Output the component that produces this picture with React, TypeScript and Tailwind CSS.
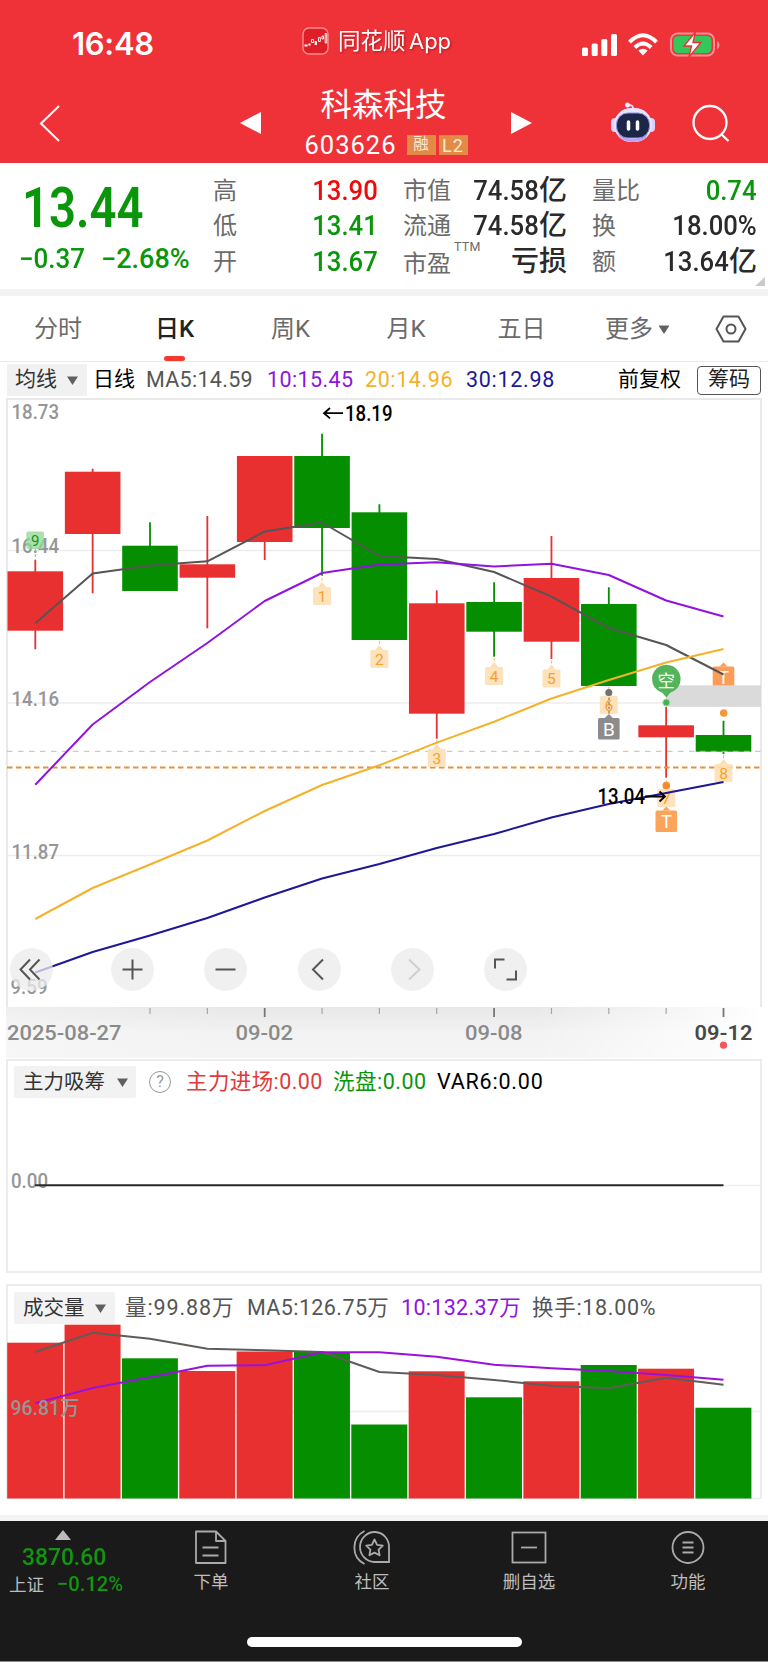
import type { ReactNode } from 'react';

import clsx from 'clsx';

const RED = '#e83030';
const GREEN = '#058f00';

const STEP = 57.35;
const FIRST_X = 35.3;

const candleX = (index: number) => FIRST_X + index * STEP;

type Candle = {
  up: boolean;
  top: number;
  bottom: number;
  high: number;
  low: number;
  volume: number;
};

const candles: Candle[] = [
  { up: true, top: 571.3, bottom: 630.7, high: 560, low: 649.3, volume: 1342.7 },
  { up: true, top: 471.7, bottom: 534, high: 468.7, low: 593.3, volume: 1324.7 },
  { up: false, top: 545.7, bottom: 591, high: 522.3, low: 591, volume: 1358.3 },
  { up: true, top: 564.3, bottom: 577.7, high: 516, low: 628.3, volume: 1371 },
  { up: true, top: 456, bottom: 542, high: 456, low: 560, volume: 1351.5 },
  { up: false, top: 456, bottom: 528, high: 433.7, low: 575.7, volume: 1352 },
  { up: false, top: 512.3, bottom: 640, high: 504.3, low: 640, volume: 1424.5 },
  { up: true, top: 603.3, bottom: 713.7, high: 590.3, low: 738.7, volume: 1371.3 },
  { up: false, top: 602, bottom: 631.7, high: 582.3, low: 656.7, volume: 1397.3 },
  { up: true, top: 578, bottom: 641.7, high: 536, low: 659, volume: 1381.3 },
  { up: false, top: 604, bottom: 686, high: 587.3, low: 686, volume: 1365 },
  { up: true, top: 725.3, bottom: 737.3, high: 707, low: 777.7, volume: 1368.7 },
  { up: false, top: 735, bottom: 751.7, high: 720.7, low: 754, volume: 1407.7 },
];

const priceLines = [
  {
    color: '#555555',
    values: [623.3, 573.6, 565.5, 561.3, 531.5, 522.5, 556, 559, 572, 596.7, 628, 645, 674.5],
  },
  {
    color: '#9013e0',
    values: [784.7, 724.5, 682, 643, 601, 573, 564.5, 562.3, 566.5, 563.7, 575, 600.5, 616.5],
  },
  {
    color: '#f3b229',
    values: [919, 888, 864.5, 840.5, 811, 785, 765.3, 742.6, 721.7, 698.5, 680, 662.5, 649],
  },
  {
    color: '#1c1896',
    values: [972.5, 952, 935.5, 918, 897.5, 878.5, 864, 848, 834, 817.5, 804, 793, 782],
  },
];

const volumeLines = [
  {
    color: '#605c58',
    values: [1352, 1332.7, 1338.7, 1348.7, 1350.3, 1352, 1372, 1375, 1380, 1385.7, 1388.3, 1377.7, 1384.7],
  },
  {
    color: '#9a10dc',
    values: [1403.3, 1388, 1377.3, 1365.7, 1365.3, 1352.3, 1352.3, 1356.7, 1364.7, 1368.3, 1371, 1375, 1379.7],
  },
];

const toPoints = (values: number[]) =>
  values.map((y, index) => `${candleX(index)},${y}`).join(' ');

function Lines({ lines }: { lines: typeof priceLines }) {
  return (
    <>
      {lines.map(({ color, values }) => (
        <polyline
          key={color}
          points={toPoints(values)}
          fill="none"
          stroke={color}
          strokeWidth="2"
          strokeLinejoin="round"
        />
      ))}
    </>
  );
}

function Label({
  x,
  y,
  width,
  size = 21,
  fill = '#969696',
  weight = 500,
  children,
}: {
  x: number;
  y: number;
  width: number;
  size?: number;
  fill?: string;
  weight?: number;
  children: string;
}) {
  return (
    <text
      x={x}
      y={y}
      fontSize={size}
      fontWeight={weight}
      fill={fill}
      textLength={width}
      lengthAdjust="spacingAndGlyphs"
    >
      {children}
    </text>
  );
}

/** Numbered tag under a candle, y is the top of the square. */
function CountTag({ x, y, children }: { x: number; y: number; children: string }) {
  return (
    <g>
      <path d={`M${x} ${y - 9}V${y - 2}`} stroke="#f5b85c" strokeDasharray="3 2" />
      <rect x={x - 9} y={y} width="18" height="18" rx="1.5" fill="#fddfb4" fillOpacity="0.9" />
      <path d={`M${x - 4} ${y}L${x} ${y - 5}L${x + 4} ${y}Z`} fill="#fddfb4" />
      <text x={x} y={y + 14.5} fontSize="15.5" fill="#f5a12c" textAnchor="middle">
        {children}
      </text>
    </g>
  );
}

function LetterTag({
  x,
  y,
  fill,
  children,
}: {
  x: number;
  y: number;
  fill: string;
  children: string;
}) {
  return (
    <g>
      <path d={`M${x - 4} ${y}L${x} ${y - 4}L${x + 4} ${y}Z`} fill={fill} />
      <rect x={x - 10.8} y={y} width="21.6" height="21.6" rx="1.5" fill={fill} />
      <text x={x} y={y + 17.5} fontSize="19" fill="#fff" textAnchor="middle">
        {children}
      </text>
    </g>
  );
}

function RoundButton({ children, muted }: { children: ReactNode; muted?: boolean }) {
  return (
    <button className="flex size-[43px] items-center justify-center rounded-full bg-[#ebebeb]/75">
      <svg
        width="43"
        height="43"
        viewBox="0 0 43 43"
        fill="none"
        stroke={muted ? '#cfcfcf' : '#555'}
        strokeWidth="2"
      >
        {children}
      </svg>
    </button>
  );
}

function Caret({ className }: { className?: string }) {
  return (
    <svg width="11" height="9" viewBox="0 0 11 9" className={className}>
      <path d="M0 .5h11L5.5 9z" fill="#606060" />
    </svg>
  );
}

function StatusBar() {
  return (
    <div className="flex h-[86px] items-start text-white">
      <span className="w-[229px] pl-[72px] pt-[26px] font-[Inter] text-[31px] leading-9 font-semibold tracking-[-0.3px]">
        16:48
      </span>
      <div className="flex flex-1 items-center gap-[9px] pl-[73px] pt-[25px]">
        <svg width="27" height="28" viewBox="0 0 27 28" fill="none">
          <rect x="1" y="1" width="25" height="26" rx="6" fill="#df1f27" stroke="#ff8b8b" strokeWidth="1.4" />
          <path d="M2.500 18.500h3M6.500 17.500h2" stroke="#fff" strokeWidth="2.200" />
          <path d="M9.500 15.500v-3h2v3zM16.500 14.500v-4h1.800v4zM20 12V9h1.500v3zM23.200 16V6.500h1.500V16z" stroke="#fff" strokeWidth=".9" />
          <path d="M13.800 14v4" stroke="#fff" strokeWidth="2.200" />
        </svg>
        <span className="text-[22.500px] leading-8 drop-shadow-[1px_1px_1px_rgba(90,0,0,0.45)]">
          同花顺 <span className="-ml-[2px] font-[Inter] text-[22px] tracking-[-0.1px]">App</span>
        </span>
      </div>
      <div className="flex w-[186px] items-center gap-[11px] pt-[32px]">
        <svg width="35" height="24" viewBox="0 0 35 24" fill="#fff">
          <rect x="0" y="14.500" width="6" height="8.500" rx="1.500" />
          <rect x="9.700" y="10.500" width="6" height="12.500" rx="1.500" />
          <rect x="19.300" y="6" width="6" height="17" rx="1.500" />
          <rect x="29" y="1" width="6" height="22" rx="1.500" />
        </svg>
        <svg width="30" height="23" viewBox="0 0 30 23" fill="none" stroke="#fff" strokeWidth="4">
          <path d="M1.500 9.200Q15-4.800 28.500 9.200" />
          <path d="M6.800 14.500Q15 6.500 23.200 14.500" />
          <path d="M15 22.500l-4.600-5q4.600-3.600 9.200 0z" fill="#fff" stroke="none" />
        </svg>
        <svg width="50" height="25" viewBox="0 0 50 25" fill="none" className="ml-[1px]">
          <rect x="1" y="1.500" width="43" height="22" rx="6.500" stroke="#f78f94" strokeWidth="2" />
          <rect x="3.500" y="4" width="38" height="17" rx="4.500" fill="#34c759" />
          <path d="M47 9v8q2.500-1 2.500-4T47 9z" fill="#f78f94" />
          <path d="M25.500 0L14 14h7.500L19 25 31 10.500h-8z" fill="#fff" stroke="#ef3138" strokeWidth="1.400" />
        </svg>
      </div>
    </div>
  );
}

function TitleBar() {
  return (
    <div className="flex h-[77px] items-start text-white">
      <svg width="240" height="77" viewBox="0 0 240 77" fill="none" className="shrink-0">
        <path d="M59 20L41 37.500L59 55" stroke="#fff" strokeWidth="2" />
      </svg>
      <svg width="21" height="77" viewBox="0 0 21 77" className="shrink-0">
        <path d="M21 26v22L0 37z" fill="#fff" />
      </svg>
      <div className="flex w-[250px] flex-col items-center">
        <h1 className="h-10 pr-[5px] text-[31.500px] leading-10">科森科技</h1>
        <div className="flex items-center gap-[3px] pt-[7px]">
          <span className="mr-[7px] text-[25.500px] leading-6 tracking-[1px]">603626</span>
          <span className="flex h-[20px] w-[29px] items-center justify-center bg-[#e38b46] text-[15.500px] text-[#fde9d0]">
            融
          </span>
          <span className="flex h-[20px] w-[29px] items-center justify-center bg-[#e38b46] text-[18px] tracking-[1px] text-[#fde9d0]">
            L2
          </span>
        </div>
      </div>
      <svg width="21" height="77" viewBox="0 0 21 77" className="shrink-0">
        <path d="M0 26v22l21-11z" fill="#fff" />
      </svg>
      <svg width="46" height="42" viewBox="0 0 46 42" fill="none" className="mt-[15px] ml-[78px] shrink-0">
        <path d="M23 9q1-5-4-5" stroke="#e4dcfa" strokeWidth="2" />
        <circle cx="17.500" cy="4" r="2.500" fill="#eee8ff" />
        <rect x="1" y="17" width="9" height="14" rx="4" fill="#d9d3fb" />
        <rect x="36" y="17" width="9" height="14" rx="4" fill="#d9d3fb" />
        <rect x="4" y="7" width="38" height="34" rx="17" fill="#e9e3fd" />
        <path d="M8 33q15 10 30 0-4 8-15 8T8 33z" fill="#b9a4f3" />
        <rect x="6.500" y="12" width="33" height="25" rx="11.500" fill="#1c2748" stroke="#8f93ea" strokeWidth="1" />
        <path d="M18.500 21v7M27.500 21v7" stroke="#fff" strokeWidth="3.500" strokeLinecap="round" />
      </svg>
      <svg width="40" height="40" viewBox="0 0 40 40" fill="none" className="mt-[18px] ml-[36px] shrink-0">
        <circle cx="18" cy="18.500" r="16.500" stroke="#fff" strokeWidth="2.300" />
        <path d="M29 30l7.500 7" stroke="#fff" strokeWidth="2.300" />
      </svg>
    </div>
  );
}

type QuoteRow = {
  label: string;
  color: string;
  value?: string;
  unit?: string;
  note?: string;
};

const quoteColumns: { className: string; rows: QuoteRow[] }[] = [
  {
    className: 'w-[165px] ml-[213px]',
    rows: [
      { label: '高', value: '13.90', color: 'text-[#f00b0b]' },
      { label: '低', value: '13.41', color: 'text-[#0a960a]' },
      { label: '开', value: '13.67', color: 'text-[#0a960a]' },
    ],
  },
  {
    className: 'w-[164px] ml-[25px]',
    rows: [
      { label: '市值', value: '74.58', unit: '亿', color: 'text-[#2a2a2a]' },
      { label: '流通', value: '74.58', unit: '亿', color: 'text-[#2a2a2a]' },
      { label: '市盈', note: 'TTM', unit: '亏损', color: 'text-[#2a2a2a]' },
    ],
  },
  {
    className: 'w-[165px] ml-[25px]',
    rows: [
      { label: '量比', value: '0.74', color: 'text-[#0a960a]' },
      { label: '换', value: '18.00%', color: 'text-[#2a2a2a]' },
      { label: '额', value: '13.64', unit: '亿', color: 'text-[#2a2a2a]' },
    ],
  },
];

function Quote() {
  return (
    <section className="relative flex h-[126px] bg-white">
      <div className="absolute top-0 left-0 flex flex-col font-medium text-[#0a960a]">
        <span className="mt-[20px] ml-[22px] origin-left scale-x-[0.86] text-[55px] leading-[50px] font-semibold">
          13.44
        </span>
        <div className="mt-[11px] flex text-[27px] leading-[30px]">
          <span className="ml-[19px] w-[82px] origin-left scale-x-[0.96]">−0.37</span>
          <span className="origin-left">−2.68%</span>
        </div>
      </div>
      {quoteColumns.map(({ className, rows }) => (
        <dl key={rows[0].label} className={clsx('flex shrink-0 flex-col pt-[10px]', className)}>
          {rows.map(({ label, value, unit, note, color }) => (
            <div key={label} className="flex h-[35.500px] items-center">
              <dt className={clsx('flex text-[24px] text-[#6b6b6b]', note && 'pt-[4px]')}>
                {label}
                {note && <sup className="top-[1px] ml-[3px] text-[12.500px] tracking-[0.3px]">{note}</sup>}
              </dt>
              <dd className={clsx('ml-auto flex items-center font-medium', color)}>
                {value && (
                  <span className="origin-right scale-x-[0.9] text-[28.500px] leading-8">{value}</span>
                )}
                {unit && <span className="text-[28px] leading-8">{unit}</span>}
              </dd>
            </div>
          ))}
        </dl>
      ))}
      <svg width="10" height="9" viewBox="0 0 10 9" className="absolute right-[3px] bottom-[3px]">
        <path d="M10 0v9H0z" fill="#c9c9c9" />
      </svg>
    </section>
  );
}

function Tabs() {
  const tabs = [
    { label: '分时', className: 'w-[116px]' },
    { label: '日K', className: 'w-[117px]', active: true },
    { label: '周K', className: 'w-[115px]' },
    { label: '月K', className: 'w-[116px]' },
    { label: '五日', className: 'w-[115px]' },
  ];

  return (
    <nav className="box-content flex h-[65px] items-center border-t-[7px] border-b border-t-[#f3f3f3] border-b-[#e9e9e9] bg-white text-[24px] text-[#6b6b6b]">
      {tabs.map(({ label, className, active }) => (
        <div
          key={label}
          className={clsx('relative flex h-full shrink-0 items-center justify-center pt-px', className, {
            'font-medium text-[#222]': active,
          })}
        >
          {label}
          {active && <i className="absolute bottom-0 h-[5px] w-[21px] rounded-full bg-[#f9382f]" />}
        </div>
      ))}
      <div className="ml-[26px] flex items-center gap-[5px] pt-px">
        更多
        <Caret className="w-[12px]" />
      </div>
      <svg width="32" height="28" viewBox="0 0 32 28" fill="none" stroke="#555" strokeWidth="2" className="ml-[45px]">
        <path d="M8.500 1.500h15L30.500 14l-7 12.500h-15L1.500 14z" strokeLinejoin="round" />
        <circle cx="16" cy="14" r="4.500" />
      </svg>
    </nav>
  );
}

function AverageBar() {
  return (
    <div className="flex h-[36px] items-center pl-[7px] text-[21px] text-[#555]">
      <div className="flex h-[32px] w-[80px] items-center gap-[10px] bg-[#f1f1f1] pl-[8px] text-[#333]">
        均线
        <Caret />
      </div>
      <span className="ml-[6px] w-[53px] text-black">日线</span>
      <span className="w-[121px] text-[21.500px] tracking-[0.300px]">MA5:14.59</span>
      <span className="w-[98px] text-[21.500px] tracking-[0.400px] text-[#9013e0]">10:15.45</span>
      <span className="w-[101px] text-[21.500px] tracking-[0.600px] text-[#f3b229]">20:14.96</span>
      <span className="w-[152px] text-[21.500px] tracking-[0.700px] text-[#1c1896]">30:12.98</span>
      <span className="w-[79px] text-black">前复权</span>
      <span className="flex h-[29px] w-[64px] items-center justify-center rounded-[4px] border-[1.500px] border-[#555] text-[#222]">
        筹码
      </span>
    </div>
  );
}

function PriceChart() {
  const ticks = [2, 3, 4, 5, 6, 7, 8, 9, 10, 11, 12];

  return (
    <div className="relative h-[661px]">
      <svg width="768" height="661" viewBox="0 398 768 661" className="block">
        <defs>
          <linearGradient id="axis" x1="0" y1="0" x2="0" y2="1">
            <stop offset="0" stopColor="#e8e8e8" />
            <stop offset="0.500" stopColor="#f2f2f2" />
            <stop offset="1" stopColor="#f4f4f4" />
          </linearGradient>
          <linearGradient id="fade" x1="0" y1="0" x2="1" y2="0">
            <stop offset="0" stopColor="#fff" stopOpacity="0.300" />
            <stop offset="0.300" stopColor="#fff" stopOpacity="0" />
            <stop offset="0.700" stopColor="#fff" stopOpacity="0" />
            <stop offset="0.950" stopColor="#fff" stopOpacity="0.800" />
            <stop offset="1" stopColor="#fff" />
          </linearGradient>
        </defs>
        <path d="M7 1008V399H761V1008" fill="none" stroke="#e9e9e9" strokeWidth="2" />
        <rect x="6" y="1007" width="756" height="51" fill="url(#axis)" />
        <rect x="6" y="1007" width="756" height="51" fill="url(#fade)" />
        {[550.5, 703, 855.5].map((y) => (
          <path key={y} d={`M8 ${y}H760`} stroke="#ededed" strokeWidth="1.300" />
        ))}

        <Label x={11.5} y={418.5} width={47.5}>18.73</Label>
        <Label x={11.5} y={553.3} width={47.5}>16.44</Label>
        <Label x={11.5} y={705.5} width={47.5}>14.16</Label>
        <Label x={11.5} y={858.5} width={47.5}>11.87</Label>
        <Label x={10.5} y={993.5} width={37}>9.59</Label>

        {candles.map(({ up, top, bottom, high, low }, index) => (
          <g key={index} fill={up ? RED : GREEN}>
            <rect x={candleX(index) - 0.9} y={high} width="1.8" height={low - high} />
            <rect x={candleX(index) - 27.8} y={top} width="55.6" height={bottom - top} />
          </g>
        ))}

        <path d="M7 751.300H761" stroke="#c9bfa0" strokeWidth="1" strokeDasharray="5.500 5.500" />
        <path d="M7 767.500H761" stroke="#ea9037" strokeWidth="1.800" strokeDasharray="5.500 3.500" />

        <rect x="26.300" y="531.500" width="17.700" height="17.500" rx="2" fill="#8fd694" fillOpacity="0.750" />
        <path d="M35.300 549v11" stroke="#7cc97f" strokeDasharray="3 2" />
        <text x="35.300" y="545.500" fontSize="15" fill="#0d9a1c" textAnchor="middle">9</text>
        <CountTag x={candleX(5)} y={587}>1</CountTag>
        <CountTag x={candleX(6)} y={650}>2</CountTag>
        <CountTag x={candleX(7)} y={749}>3</CountTag>
        <CountTag x={candleX(8)} y={667}>4</CountTag>
        <CountTag x={candleX(9)} y={669.5}>5</CountTag>
        <CountTag x={candleX(10)} y={696}>6</CountTag>
        <CountTag x={candleX(11)} y={789}>7</CountTag>
        <CountTag x={candleX(12)} y={764}>8</CountTag>

        <path d="M609 693v24" stroke="#666" strokeDasharray="2.500 2" />
        <circle cx="608.800" cy="692.500" r="3.500" fill="#707070" />
        <LetterTag x={608.8} y={718} fill="#8d8b8e">B</LetterTag>
        <LetterTag x={666.3} y={810.5} fill="#fda45b">T</LetterTag>
        <LetterTag x={723.5} y={666.5} fill="#fb9c58">T</LetterTag>
        <rect x="666" y="685.300" width="95" height="21.500" fill="#dadada" />
        <Lines lines={priceLines} />
        <circle cx="723.700" cy="713" r="3.800" fill="#f8963c" />
        <circle cx="666.300" cy="785.500" r="3.800" fill="#f58a2e" />
        <circle cx="666.300" cy="702.500" r="3.500" fill="#45b050" stroke="#a8d8aa" />
        <path
          d="M666.300 697.500l-4-4.800a14.300 14.300 0 1 1 8 0z"
          fill="#53b45a"
        />
        <text x="666.300" y="686.500" fontSize="17.500" fill="#fff" textAnchor="middle">空</text>

        <g fill="none" stroke="#000" strokeWidth="1.800">
          <path d="M343 413.200H324M330 408l-6 5.200 6 5.200" />
          <path d="M645 796.500h20M659.500 791.500l5.500 5-5.500 5" />
        </g>
        <Label x={345} y={420.5} width={47.5} size={21.5} fill="#000">18.19</Label>
        <Label x={597.5} y={804} width={47.5} size={21.5} fill="#000">13.04</Label>

        {ticks.map((index) => (
          <path
            key={index}
            d={`M${candleX(index)} 1008v${index % 4 === 0 ? 9 : 6}`}
            stroke={index % 4 === 0 ? '#777' : '#a5a5a5'}
            strokeWidth={index % 4 === 0 ? 1.8 : 1.2}
          />
        ))}
        <Label x={7} y={1040} width={114.500} size={20.500} fill="#8a8a8a">2025-08-27</Label>
        <Label x={235.5} y={1039.500} width={57.500} size={20.500} fill="#8a8a8a">09-02</Label>
        <Label x={465} y={1039.500} width={57.500} size={20.500} fill="#8a8a8a">09-08</Label>
        <Label x={694.5} y={1039.500} width={58} size={20.500} weight={600} fill="#484848">09-12</Label>
        <circle cx="723.500" cy="1045.200" r="3.600" fill="#f0575f" />
      </svg>
      <div className="absolute top-[550px] left-[10px] flex">
        <RoundButton>
          <path d="M20 11.500L10.500 21.500L20 31.500M29.500 11.500L20 21.500L29.500 31.500" />
        </RoundButton>
        <div className="ml-[58px] flex gap-[50.300px]">
          <RoundButton>
            <path d="M11.500 21.500h20M21.500 11.500v20" />
          </RoundButton>
          <RoundButton>
            <path d="M11.500 21.500h20" />
          </RoundButton>
          <RoundButton>
            <path d="M25 11.500L15 21.500L25 31.500" />
          </RoundButton>
          <RoundButton muted>
            <path d="M18 11.500L28.500 21.500L18 31.500" />
          </RoundButton>
          <RoundButton>
            <path d="M11 20.500v-9h9.500M32 22.500v9h-9.500" />
          </RoundButton>
        </div>
      </div>
    </div>
  );
}

function MainForcePanel() {
  return (
    <section className="mx-[6px] h-[214px] border-2 border-[#ececec]">
      <div className="flex items-center pt-[5px] pl-[6px] text-[21.500px]">
        <div className="flex h-[32px] w-[122px] items-center gap-[12px] rounded-[2px] bg-[#f2f2f2] pl-[9px] text-[20.500px] text-[#333]">
          主力吸筹
          <Caret />
        </div>
        <div className="ml-[13px] flex size-[22px] items-center justify-center rounded-full border-[1.500px] border-[#999] text-[16px] text-[#999]">
          ?
        </div>
        <span className="ml-[15px] w-[147px] tracking-[0.400px] text-[#e03a3a]">主力进场:0.00</span>
        <span className="w-[104px] tracking-[0.500px] text-[#0a960a]">洗盘:0.00</span>
        <span className="tracking-[0.800px] text-black">VAR6:0.00</span>
      </div>
      <svg width="752" height="60" viewBox="8 1150 752 60" className="mt-[51px]">
        <path d="M723 1186.300H760" stroke="#ececec" />
        <Label x={11} y={1189} width={37}>0.00</Label>
        <path d="M35 1186.300H723.500" stroke="#2b2729" strokeWidth="2" />
      </svg>
    </section>
  );
}

function VolumePanel() {
  return (
    <section className="mx-[6px] mt-[11px] h-[215px] border-2 border-b-0 border-[#ececec]">
      <div className="flex items-center pt-[6px] pl-[6px] text-[21.500px] text-[#555]">
        <div className="flex h-[32px] w-[101px] items-center gap-[10px] rounded-[2px] bg-[#f2f2f2] pl-[9px] text-[20.500px] text-[#333]">
          成交量
          <Caret />
        </div>
        <span className="ml-[10px] w-[122px] tracking-[0.900px]">量:99.88万</span>
        <span className="w-[154px] tracking-[0.400px]">MA5:126.75万</span>
        <span className="w-[131px] tracking-[0.300px] text-[#9013e0]">10:132.37万</span>
        <span className="tracking-[0.700px]">换手:18.00%</span>
      </div>
      <svg width="752" height="175" viewBox="8 1324 752 175" className="block overflow-visible">
        <path d="M8 1411.500H760M8 1498.500H761" stroke="#ededed" strokeWidth="1.300" />
        {candles.map(({ up, volume }, index) => (
          <rect
            key={index}
            x={candleX(index) - 28.1}
            y={volume}
            width="56"
            height={1498.5 - volume}
            fill={up ? RED : GREEN}
          />
        ))}
        <Lines lines={volumeLines} />
        <Label x={10.5} y={1414.500} width={69} size={20.500}>96.81万</Label>
      </svg>
    </section>
  );
}

function FooterItem({
  label,
  className,
  children,
}: {
  label: string;
  className: string;
  children: ReactNode;
}) {
  return (
    <div className={clsx('flex flex-col items-center', className)}>
      <svg width="38" height="36" viewBox="0 0 38 36" fill="none" stroke="#aaa" strokeWidth="1.800">
        {children}
      </svg>
      <span className="mt-[5px] text-[17.500px] leading-6 text-[#bdbdbd]">{label}</span>
    </div>
  );
}

function Footer() {
  return (
    <footer className="flex h-[140px] flex-col bg-[#1a1a1b]">
      <div className="flex h-[116px]">
        <div className="w-[126px] shrink-0 pt-[9px]">
          <svg width="16" height="10" viewBox="0 0 16 10" className="ml-[55px]">
            <path d="M8 0l8 10H0z" fill="#bbb" />
          </svg>
          <p className="ml-[22px] origin-left scale-x-[0.95] pt-[3px] text-[24px] leading-7 font-medium text-[#12960f]">
            3870.60
          </p>
          <p className="flex items-center pl-[9px] leading-6">
            <span className="w-[49px] pt-[2px] text-[17.500px] text-[#bdbdbd]">上证</span>
            <span className="origin-left scale-x-[0.96] text-[21px] font-medium text-[#12960f]">−0.12%</span>
          </p>
        </div>
        <FooterItem label="下单" className="ml-[45px] mt-[8px] w-[80px]">
          <path d="M4 2.500h20l9.500 9.500v22H4zM24 2.500v9.500h9.500M10.500 18.500h16M10.500 26.500h16" strokeLinejoin="round" />
        </FooterItem>
        <FooterItem label="社区" className="ml-[81px] mt-[8px] w-[80px]">
          <path d="M36 33V19A14.500 15 0 1 0 21.500 33H36z" />
          <path d="M11.500 2A18.500 18.500 0 0 0 11.500 35" />
          <path d="M21.500 10.500l2.600 5.300 5.700.8-4.200 4 1 5.700-5.100-2.700-5.100 2.700 1-5.700-4.200-4 5.700-.8z" strokeLinejoin="round" />
        </FooterItem>
        <FooterItem label="删自选" className="ml-[77px] mt-[8px] w-[80px]">
          <rect x="2.500" y="3.500" width="33" height="30" />
          <path d="M11 18.500h16" />
        </FooterItem>
        <FooterItem label="功能" className="ml-[79px] mt-[8px] w-[80px]">
          <circle cx="19" cy="18.500" r="15.500" />
          <path d="M13.500 13.500h11M13.500 18.500h11M13.500 23.500h11" />
        </FooterItem>
      </div>
      <div className="ml-[247px] h-[10px] w-[275px] rounded-full bg-white" />
    </footer>
  );
}

export default function App() {
  return (
    <main className="h-[1662px] w-[768px] overflow-hidden bg-white font-[Roboto,'Noto_Sans_CJK_SC',sans-serif]">
      <header className="bg-[#ef3138]">
        <StatusBar />
        <TitleBar />
      </header>
      <Quote />
      <Tabs />
      <AverageBar />
      <PriceChart />
      <MainForcePanel />
      <VolumePanel />
      <div className="mt-[16px] h-[6px] bg-[#f2f3f5]" />
      <Footer />
      <div className="h-px bg-[#8a8a8a]" />
    </main>
  );
}
